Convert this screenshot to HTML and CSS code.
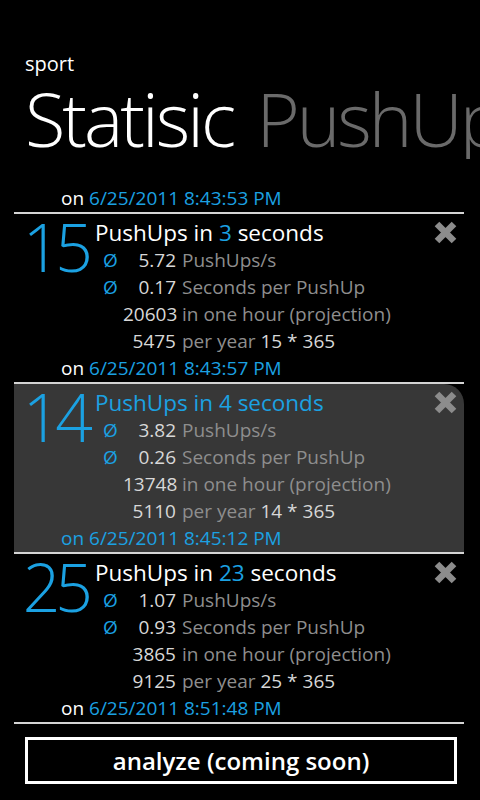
FILE: index.html
```html
<!DOCTYPE html>
<html lang="en">
<head>
    <meta charset="UTF-8">
    <meta name="viewport" content="width=device-width, initial-scale=1.0">
    <title>sport - Statisic</title>
    <link rel="stylesheet" href="styles.css">
</head>
<body>
    <div class="page">
        <header class="pivot-header">
            <div class="app-name">sport</div>
            <h1 class="pivot-title">
                <span class="pivot-item current">Statisic</span>
                <span class="pivot-item">PushUps</span>
            </h1>
        </header>

        <ul class="stats-list">
            <!-- entry scrolled mostly out of view, only its date is visible -->
            <li class="entry tail">
                <div class="entry-date"><span class="on">on</span> <span class="accent">6/25/2011 8:43:53 PM</span></div>
            </li>

            <li class="entry">
                <div class="entry-count">15</div>
                <div class="entry-head">PushUps in <span class="accent">3</span> seconds</div>
                <button class="delete-btn" aria-label="delete">
                    <svg viewBox="0 0 25 25" width="25" height="25"><path d="M4 4L21 21M21 4L4 21"/></svg>
                </button>
                <div class="entry-stats">
                    <div class="stat"><span class="avg">Ø</span><span class="val">5.72</span><span class="label">PushUps/s</span></div>
                    <div class="stat"><span class="avg">Ø</span><span class="val">0.17</span><span class="label">Seconds per PushUp</span></div>
                    <div class="stat"><span class="avg"></span><span class="val">20603</span><span class="label">in one hour (projection)</span></div>
                    <div class="stat"><span class="avg"></span><span class="val">5475</span><span class="label">per year <span class="num">15 * 365</span></span></div>
                </div>
                <div class="entry-date"><span class="on">on</span> <span class="accent">6/25/2011 8:43:57 PM</span></div>
            </li>

            <li class="entry selected">
                <div class="entry-count">14</div>
                <div class="entry-head">PushUps in <span class="accent">4</span> seconds</div>
                <button class="delete-btn" aria-label="delete">
                    <svg viewBox="0 0 25 25" width="25" height="25"><path d="M4 4L21 21M21 4L4 21"/></svg>
                </button>
                <div class="entry-stats">
                    <div class="stat"><span class="avg">Ø</span><span class="val">3.82</span><span class="label">PushUps/s</span></div>
                    <div class="stat"><span class="avg">Ø</span><span class="val">0.26</span><span class="label">Seconds per PushUp</span></div>
                    <div class="stat"><span class="avg"></span><span class="val">13748</span><span class="label">in one hour (projection)</span></div>
                    <div class="stat"><span class="avg"></span><span class="val">5110</span><span class="label">per year <span class="num">14 * 365</span></span></div>
                </div>
                <div class="entry-date"><span class="on">on</span> <span class="accent">6/25/2011 8:45:12 PM</span></div>
            </li>

            <li class="entry">
                <div class="entry-count">25</div>
                <div class="entry-head">PushUps in <span class="accent">23</span> seconds</div>
                <button class="delete-btn" aria-label="delete">
                    <svg viewBox="0 0 25 25" width="25" height="25"><path d="M4 4L21 21M21 4L4 21"/></svg>
                </button>
                <div class="entry-stats">
                    <div class="stat"><span class="avg">Ø</span><span class="val">1.07</span><span class="label">PushUps/s</span></div>
                    <div class="stat"><span class="avg">Ø</span><span class="val">0.93</span><span class="label">Seconds per PushUp</span></div>
                    <div class="stat"><span class="avg"></span><span class="val">3865</span><span class="label">in one hour (projection)</span></div>
                    <div class="stat"><span class="avg"></span><span class="val">9125</span><span class="label">per year <span class="num">25 * 365</span></span></div>
                </div>
                <div class="entry-date"><span class="on">on</span> <span class="accent">6/25/2011 8:51:48 PM</span></div>
            </li>
        </ul>

        <button class="analyze-btn">analyze (coming soon)</button>
    </div>
</body>
</html>
```

FILE: styles.css
```css
:root {
    --accent: #1ba1e2;
    --text: #ffffff;
    --value: #d8d8d8;
    --muted: #8e8e8e;
    --line: #d4d4d4;
    --selected-bg: #373737;
}

* {
    box-sizing: border-box;
}

body {
    margin: 0;
    background: #000;
    color: var(--text);
    font-family: "Open Sans", "Noto Sans", sans-serif;
    width: 480px;
    height: 800px;
    overflow: hidden;
}

.pivot-header {
    padding: 50px 0 0 25px;
}

.app-name {
    font-size: 20px;
    line-height: 28px;
}

.pivot-title {
    margin: 1px 0 0;
    height: 80px;
    font-size: 74px;
    font-weight: 300;
    line-height: 80px;
    letter-spacing: -3px;
    word-spacing: 7px;
    white-space: nowrap;
    overflow: hidden;
}

.pivot-item {
    color: #6a6a6a;
}

.pivot-item.current {
    color: var(--text);
}

.stats-list {
    list-style: none;
    margin: 26px 16px 0 14px;
    padding: 0;
}

.entry {
    display: grid;
    grid-template-columns: 81px 1fr 40px;
    grid-template-rows: 29px 108px 27px;
    grid-template-areas:
        "count head del"
        "count stats del"
        "date date date";
    height: 170px;
    padding-top: 4px;
    border-bottom: 2px solid var(--line);
}

.entry.tail {
    display: block;
    height: 29px;
    padding-top: 0;
}

.entry.selected {
    background: var(--selected-bg);
    border-top-right-radius: 20px;
}

.entry-count {
    grid-area: count;
    align-self: start;
    padding-right: 7px;
    text-align: right;
    color: var(--accent);
    font-size: 66px;
    font-weight: 300;
    line-height: 56px;
    letter-spacing: -5px;
}

.entry-head {
    grid-area: head;
    font-size: 22.5px;
    line-height: 29px;
    white-space: nowrap;
}

.accent {
    color: var(--accent);
}

.entry.selected .entry-head,
.entry.selected .on {
    color: var(--accent);
}

.delete-btn {
    grid-area: del;
    align-self: start;
    justify-self: end;
    margin: 2px 6px 0 0;
    padding: 0;
    background: none;
    border: none;
    cursor: pointer;
    line-height: 0;
}

.delete-btn svg {
    stroke: #8c8c8c;
    stroke-width: 6.5;
    fill: none;
}

.entry-stats {
    grid-area: stats;
    padding-left: 8px;
}

.stat {
    display: grid;
    grid-template-columns: 20px 53px auto;
    font-size: 19px;
    line-height: 27px;
    white-space: nowrap;
}

.avg {
    color: var(--accent);
}

.val {
    text-align: right;
    color: var(--value);
}

.label {
    margin-left: 6px;
    color: var(--muted);
}

.label .num {
    color: var(--value);
}

.entry-date {
    grid-area: date;
    padding-left: 47px;
    font-size: 19px;
    line-height: 27px;
}

.analyze-btn {
    display: block;
    width: 432px;
    height: 47px;
    margin: 13px 0 0 25px;
    padding: 0;
    background: none;
    border: 3px solid #fff;
    color: #fff;
    font-family: inherit;
    font-size: 24px;
    font-weight: 600;
    cursor: pointer;
}
```
